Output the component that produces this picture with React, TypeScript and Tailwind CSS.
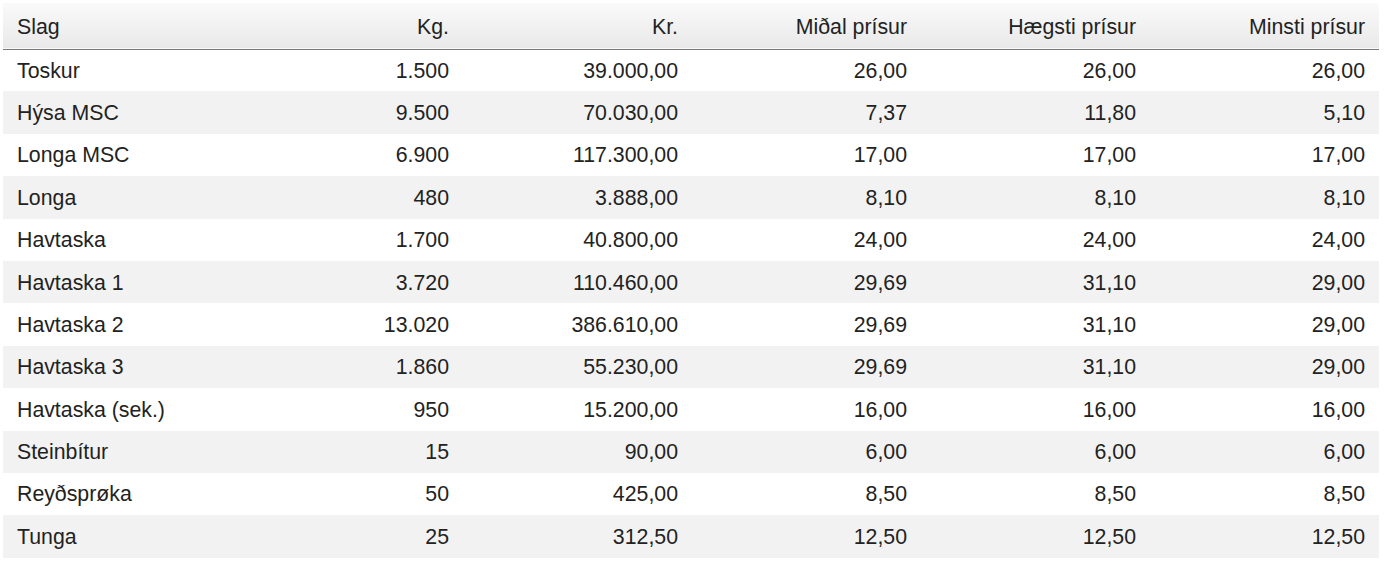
const rows: [string, string, string, string, string, string][] = [
  ['Toskur', '1.500', '39.000,00', '26,00', '26,00', '26,00'],
  ['Hýsa MSC', '9.500', '70.030,00', '7,37', '11,80', '5,10'],
  ['Longa MSC', '6.900', '117.300,00', '17,00', '17,00', '17,00'],
  ['Longa', '480', '3.888,00', '8,10', '8,10', '8,10'],
  ['Havtaska', '1.700', '40.800,00', '24,00', '24,00', '24,00'],
  ['Havtaska 1', '3.720', '110.460,00', '29,69', '31,10', '29,00'],
  ['Havtaska 2', '13.020', '386.610,00', '29,69', '31,10', '29,00'],
  ['Havtaska 3', '1.860', '55.230,00', '29,69', '31,10', '29,00'],
  ['Havtaska (sek.)', '950', '15.200,00', '16,00', '16,00', '16,00'],
  ['Steinbítur', '15', '90,00', '6,00', '6,00', '6,00'],
  ['Reyðsprøka', '50', '425,00', '8,50', '8,50', '8,50'],
  ['Tunga', '25', '312,50', '12,50', '12,50', '12,50'],
];

const headers = ['Slag', 'Kg.', 'Kr.', 'Miðal prísur', 'Hægsti prísur', 'Minsti prísur'];

export default function App() {
  return (
    <div className="min-h-screen bg-white pt-[3px] px-[3px] font-['Liberation_Sans',Arial,sans-serif] text-[#222] text-[21.3px]">
      <table className="w-[1376px] border-collapse table-fixed">
        <colgroup>
          <col className="w-[231px]" />
          <col className="w-[229px]" />
          <col className="w-[229px]" />
          <col className="w-[229px]" />
          <col className="w-[229px]" />
          <col className="w-[229px]" />
        </colgroup>
        <thead>
          <tr className="bg-gradient-to-b from-[#fafafa] to-[#e9e9e9] border-b border-[#7a7a7a]">
            {headers.map((h, i) => (
              <th
                key={h}
                className={`h-[46px] px-[14px] pt-[3px] font-normal leading-none ${i === 0 ? 'text-left' : 'text-right'}`}
              >
                {h}
              </th>
            ))}
          </tr>
        </thead>
        <tbody>
          {rows.map((r, ri) => (
            <tr key={r[0]} className={ri % 2 === 1 ? 'bg-[#f2f2f2]' : 'bg-white'}>
              {r.map((c, i) => (
                <td
                  key={i}
                  className={`h-[42.4px] px-[14px] pt-[2px] leading-none ${i === 0 ? 'text-left' : 'text-right'}`}
                >
                  {c}
                </td>
              ))}
            </tr>
          ))}
        </tbody>
      </table>
    </div>
  );
}
